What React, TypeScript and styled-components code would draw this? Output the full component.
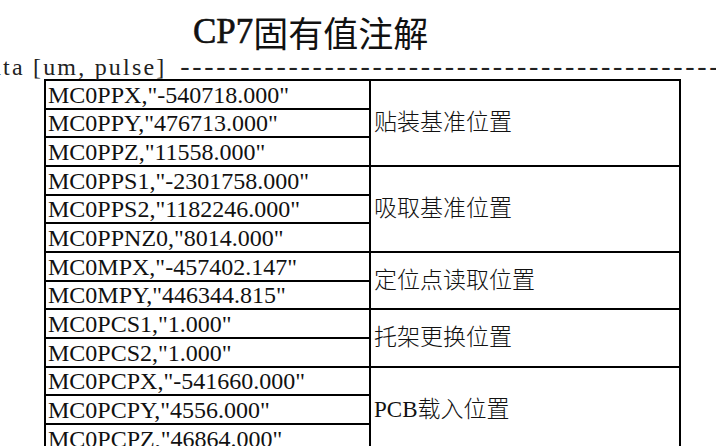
import React from "react";
import styled, { createGlobalStyle } from "styled-components";

const Global = createGlobalStyle`
  html, body { margin: 0; padding: 0; background: #fff; overflow: hidden; }
  body { width: 716px; height: 446px; }
`;

const Page = styled.div`
  width: 716px;
  height: 446px;
  overflow: hidden;
  color: #111;
  font-family: "Liberation Serif", "Noto Sans CJK SC", serif;
`;

const Title = styled.h1`
  margin: 0;
  height: 52px;
  padding-left: 193px;
  display: flex;
  align-items: flex-end;
  font-size: 35px;
  line-height: 40px;
  font-weight: normal;
  white-space: nowrap;
`;

const TitleLatin = styled.span`
  font-family: "Liberation Serif", serif;
  font-size: 35px;
  font-weight: 400;
  -webkit-text-stroke: 0.6px #111;
`;

const TitleCjk = styled.span`
  font-family: "Noto Sans CJK SC", sans-serif;
  font-weight: 400;
`;

const HeaderLine = styled.div`
  height: 27px;
  margin-left: -24px;
  font-size: 24px;
  line-height: 27px;
  white-space: nowrap;
  letter-spacing: 2.2px;
  color: #222;
`;

const Dashes = styled.span`
  margin-left: 4px;
  font-size: 28px;
  letter-spacing: 2.7px;
`;

const Table = styled.table`
  margin-left: 44px;
  border-collapse: collapse;
  table-layout: fixed;
  width: 635px;
`;

const Row = styled.tr`
  height: 28.67px;
`;

const KeyCell = styled.td`
  border: 2px solid #000;
  padding: 0 0 0 2px;
  font-size: 24px;
  line-height: 26px;
  vertical-align: bottom;
  white-space: nowrap;
  overflow: hidden;
`;

const LabelCell = styled.td`
  border: 2px solid #000;
  padding: 0 0 0 3px;
  font-size: 23px;
  line-height: 26px;
  vertical-align: middle;
  white-space: nowrap;
  font-family: "Liberation Serif", "Noto Sans CJK SC", serif;
  font-weight: 300;
`;

type Group = { label: string; items: string[] };

const groups: Group[] = [
  {
    label: "贴装基准位置",
    items: ['MC0PPX,"-540718.000"', 'MC0PPY,"476713.000"', 'MC0PPZ,"11558.000"'],
  },
  {
    label: "吸取基准位置",
    items: ['MC0PPS1,"-2301758.000"', 'MC0PPS2,"1182246.000"', 'MC0PPNZ0,"8014.000"'],
  },
  {
    label: "定位点读取位置",
    items: ['MC0MPX,"-457402.147"', 'MC0MPY,"446344.815"'],
  },
  {
    label: "托架更换位置",
    items: ['MC0PCS1,"1.000"', 'MC0PCS2,"1.000"'],
  },
  {
    label: "PCB载入位置",
    items: ['MC0PCPX,"-541660.000"', 'MC0PCPY,"4556.000"', 'MC0PCPZ,"46864.000"'],
  },
];

export default function App() {
  return (
    <Page>
      <Global />
      <Title>
        <TitleLatin>CP7</TitleLatin>
        <TitleCjk>固有值注解</TitleCjk>
      </Title>
      <HeaderLine>
        data [um, pulse]<Dashes>{" " + "-".repeat(46)}</Dashes>
      </HeaderLine>
      <Table>
        <colgroup>
          <col style={{ width: 325 }} />
          <col style={{ width: 310 }} />
        </colgroup>
        <tbody>
          {groups.map((g) =>
            g.items.map((item, i) => (
              <Row key={item}>
                <KeyCell>{item}</KeyCell>
                {i === 0 && <LabelCell rowSpan={g.items.length}>{g.label}</LabelCell>}
              </Row>
            ))
          )}
        </tbody>
      </Table>
    </Page>
  );
}
